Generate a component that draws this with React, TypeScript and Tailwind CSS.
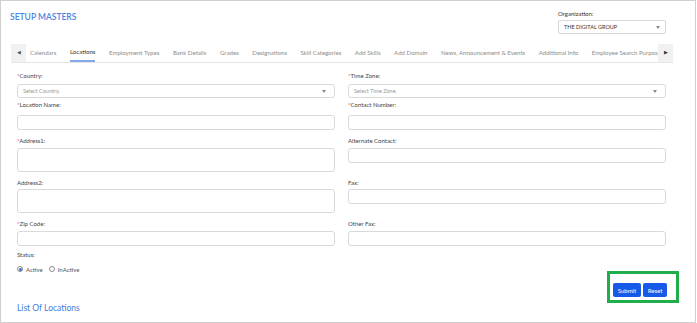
import React from "react";

const tabs = [
  "Calendars",
  "Locations",
  "Employment Types",
  "Bank Details",
  "Grades",
  "Designations",
  "Skill Categories",
  "Add Skills",
  "Add Domain",
  "News, Announcement & Events",
  "Additional Info",
  "Employee Search Purpos",
];

const Caret = () => (
  <svg width="4" height="3" viewBox="0 0 4 3">
    <path d="M0 0h4L2 3z" fill="#888" />
  </svg>
);

const Label = ({ text, req }: { text: string; req?: boolean }) => (
  <div className="h-[8px] text-[6px] leading-[8px] text-[#444]">
    {req && <span className="text-[#e53935]">*</span>}
    {text}
  </div>
);

const Select = ({ placeholder }: { placeholder: string }) => (
  <div className="h-[14px] border border-[#d9d9d9] rounded-[3px] bg-white flex items-center justify-between pl-[5px] pr-[8px]">
    <span className="text-[5.5px] text-[#999]">{placeholder}</span>
    <Caret />
  </div>
);

const Input = ({ h }: { h: string }) => (
  <div className={`${h} border border-[#d9d9d9] rounded-[3px] bg-white`} />
);

export default function App() {
  return (
    <div className="w-[696px] h-[323px] border border-[#cfcfcf] bg-white overflow-hidden [font-family:Lato,'Liberation_Sans',sans-serif]">
      {/* header */}
      <div className="flex justify-between pl-[9px] pr-[29px] pt-[8px]">
        <div className="text-[8.5px] font-semibold leading-[14px] text-[#4a84e4] mt-[1px]">
          SETUP MASTERS
        </div>
        <div className="w-[108px]">
          <div className="h-[8px] mt-[1px] text-[6px] leading-[8px] text-[#333]">Organization:</div>
          <div className="mt-[2px] h-[14px] border border-[#d9d9d9] rounded-[2px] flex items-center justify-between pl-[5px] pr-[5px]">
            <span className="text-[5.5px] text-[#333]">THE DIGITAL GROUP</span>
            <Caret />
          </div>
        </div>
      </div>

      {/* tabs */}
      <div className="mt-[10px] mx-[10px] w-[662px] h-[19px] flex border-b border-[#e6e6e6]">
        <div className="w-[15px] shrink-0 bg-[#f1f1f1] flex items-center justify-center text-[4.5px] text-[#555]">◀</div>
        <div className="flex-1 overflow-hidden flex gap-[13.5px] pl-[4px] whitespace-nowrap">
          {tabs.map((t) => (
            <div
              key={t}
              className={`h-full flex items-center text-[6.1px] ${
                t === "Locations"
                  ? "text-[#333] border-b-2 border-[#86a9e6]"
                  : "text-[#8c8c8c]"
              }`}
            >
              {t}
            </div>
          ))}
        </div>
        <div className="w-[15px] shrink-0 bg-[#f1f1f1] flex items-center justify-center text-[4.5px] text-[#333]">▶</div>
      </div>

      {/* form */}
      <div className="pl-[16px] pr-[29px]">
        <div className="grid grid-cols-2 gap-x-[13px] mt-[9px]">
          <div>
            <Label text="Country:" req />
            <div className="mt-[4px]"><Select placeholder="Select Country." /></div>
          </div>
          <div>
            <Label text="Time Zone:" req />
            <div className="mt-[4px]"><Select placeholder="Select Time Zone." /></div>
          </div>
        </div>

        <div className="grid grid-cols-2 gap-x-[13px] mt-[3px]">
          <div>
            <Label text="Location Name:" req />
            <div className="mt-[6px]"><Input h="h-[15px]" /></div>
          </div>
          <div>
            <Label text="Contact Number:" req />
            <div className="mt-[6px]"><Input h="h-[15px]" /></div>
          </div>
        </div>

        <div className="grid grid-cols-2 gap-x-[13px] mt-[7px] items-start">
          <div>
            <Label text="Address1:" req />
            <div className="mt-[3px]"><Input h="h-[24px]" /></div>
          </div>
          <div>
            <Label text="Alternate Contact:" />
            <div className="mt-[3px]"><Input h="h-[15px]" /></div>
          </div>
        </div>

        <div className="grid grid-cols-2 gap-x-[13px] mt-[7px] items-start">
          <div>
            <Label text="Address2:" />
            <div className="mt-[2px]"><Input h="h-[24px]" /></div>
          </div>
          <div>
            <Label text="Fax:" />
            <div className="mt-[2px]"><Input h="h-[15px]" /></div>
          </div>
        </div>

        <div className="grid grid-cols-2 gap-x-[13px] mt-[7px]">
          <div>
            <Label text="Zip Code:" req />
            <div className="mt-[3px]"><Input h="h-[15px]" /></div>
          </div>
          <div>
            <Label text="Other Fax:" />
            <div className="mt-[3px]"><Input h="h-[15px]" /></div>
          </div>
        </div>

        <div className="flex justify-between items-start mt-[5px]">
          <div>
            <Label text="Status:" />
            <div className="mt-[6px] h-[8px] flex items-center text-[6px] text-[#555]">
              <span className="w-[6px] h-[6px] rounded-full border border-[#8a8a8a] flex items-center justify-center">
                <span className="w-[3px] h-[3px] rounded-full bg-[#2f6fe0]" />
              </span>
              <span className="ml-[3px]">Active</span>
              <span className="ml-[6px] w-[6px] h-[6px] rounded-full border border-[#8a8a8a]" />
              <span className="ml-[3px]">InActive</span>
            </div>
            <div className="mt-[29px] text-[8.5px] leading-[12px] text-[#3f7ddf]">List Of Locations</div>
          </div>
          <div className="mt-[20px] -mr-[13px] border-[3px] border-[#1fae4b] pt-[9px] pb-[3px] pl-[3px] pr-[9px] flex gap-[2px]">
            <button className="w-[28px] h-[14px] rounded-[2px] bg-[#1759e8] text-white text-[6px]">Submit</button>
            <button className="w-[24px] h-[14px] rounded-[2px] bg-[#1759e8] text-white text-[6px]">Reset</button>
          </div>
        </div>
      </div>
    </div>
  );
}
